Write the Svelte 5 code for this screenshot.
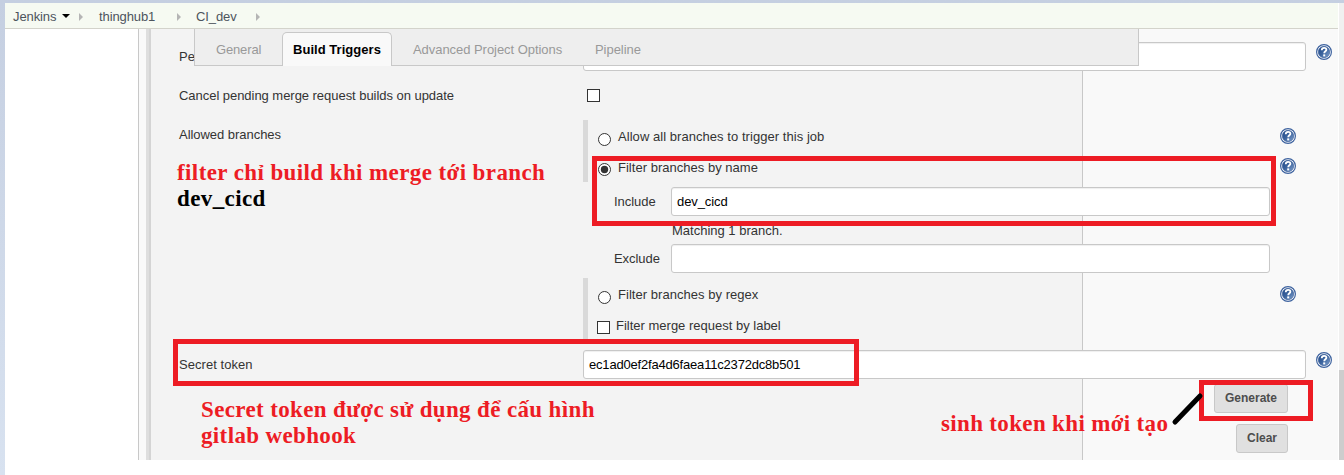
<script>
  const crumbs = ['thinghub1', 'CI_dev'];
  const tabs = ['General', 'Build Triggers', 'Advanced Project Options', 'Pipeline'];
  const active = 'Build Triggers';
</script>

{#snippet help()}
  <svg class="help" width="16" height="16" viewBox="0 0 16 16">
    <defs>
      <linearGradient id="ball" x1="0" y1="0" x2="1" y2="1">
        <stop offset="0" stop-color="#1d4686" />
        <stop offset=".5" stop-color="#3d659f" />
        <stop offset="1" stop-color="#86a6d2" />
      </linearGradient>
    </defs>
    <circle cx="8" cy="8" r="7.4" fill="#fff" stroke="#3e639f" stroke-width="1.2" />
    <circle cx="8" cy="8" r="5.7" fill="url(#ball)" stroke="#2f5695" stroke-width=".6" />
    <path d="M5.7 6.2C5.8 4.5 6.8 3.8 8.1 3.8C9.5 3.8 10.4 4.6 10.4 5.7C10.4 7.2 8.2 7.4 8.2 9.2" fill="none" stroke="#fff" stroke-width="1.8" />
    <rect x="7.2" y="10.4" width="2" height="2" fill="#fff" />
  </svg>
{/snippet}

{#snippet radio(on)}
  <svg class="radio" width="13" height="13" viewBox="0 0 13 13">
    <circle cx="6.5" cy="6.5" r="6" fill="#fff" stroke="#333" />
    {#if on}<circle cx="6.5" cy="6.5" r="3.7" fill="#333" />{/if}
  </svg>
{/snippet}

<div class="window">
  <nav class="crumbs">
    <span class="root">Jenkins</span>
    <svg class="down" width="8" height="4" viewBox="0 0 8 4"><path d="M0 0H8L4 4Z" fill="#000" /></svg>
    <svg class="sep" width="4" height="8" viewBox="0 0 4 8"><path d="M0 0L4 4L0 8Z" fill="#b5b5b5" /></svg>
    {#each crumbs as c, i}
      <span class="crumb c{i}">{c}</span>
      <svg class="sep" width="4" height="8" viewBox="0 0 4 8"><path d="M0 0L4 4L0 8Z" fill="#b5b5b5" /></svg>
    {/each}
  </nav>

  <div class="main">
    <aside></aside>
    <div class="gutter"></div>
    <div class="form">
      <div class="row first">
        <span class="label">Pe</span>
        <div class="input wide"></div>
        {@render help()}
      </div>
      <div class="row cancel">
        <span class="label">Cancel pending merge request builds on update</span>
        <span class="check"></span>
      </div>
      <div class="row">
        <span class="label allowed">Allowed branches</span>
        <div class="choices">
          <div class="group top">
            <div class="choice">{@render radio(false)}<span class="t1">Allow all branches to trigger this job</span>{@render help()}</div>
            <div class="choice">{@render radio(true)}<span class="t2">Filter branches by name</span>{@render help()}</div>
          </div>
          <div class="filter">
            <span>Include</span>
            <div class="input">dev_cicd</div>
          </div>
          <div class="match">Matching 1 branch.</div>
          <div class="filter exclude">
            <span>Exclude</span>
            <div class="input"></div>
          </div>
          <div class="group bottom">
            <div class="choice">{@render radio(false)}<span class="t3">Filter branches by regex</span>{@render help()}</div>
            <div class="choice bylabel"><span class="check"></span><span class="t4">Filter merge request by label</span></div>
          </div>
        </div>
      </div>
      <div class="row secret">
        <span class="label">Secret token</span>
        <div class="input wide">ec1ad0ef2fa4d6faea11c2372dc8b501</div>
        {@render help()}
      </div>
      <div class="buttons">
        <button class="generate">Generate</button>
        <button class="clear">Clear</button>
      </div>
    </div>
    <div class="scroll"><div class="thumb"></div></div>
  </div>

  <div class="tabs">
    {#each tabs as t, i}
      <span class="tab tab{i}" class:active={t === active}>{t}</span>
    {/each}
  </div>

  <div class="box box-filter"></div>
  <div class="box box-secret"></div>
  <div class="box box-generate"></div>
  <p class="note note-filter">filter chỉ build khi merge tới branch<br /><b>dev_cicd</b></p>
  <p class="note note-secret">Secret token được sử dụng để cấu hình<br />gitlab webhook</p>
  <p class="note note-generate">sinh token khi mới tạo</p>
  <svg class="stroke" width="34" height="36" viewBox="0 0 34 36"><path d="M5 32L30 6" stroke="#000" stroke-width="5" stroke-linecap="round" /></svg>
</div>

<style>
  :global(body) { margin: 0; background: #fff; }
  .window {
    position: relative; box-sizing: border-box; width: 1344px; height: 475px; overflow: hidden;
    padding: 3px 0 0 5px;
    background: linear-gradient(#fff, #fff) 5px 3px no-repeat, linear-gradient(#c5cfe1, #d8e2f0);
    font: 13px/15px "Liberation Sans", Arial, sans-serif; color: #333;
  }
  .crumbs {
    display: flex; align-items: center; box-sizing: border-box; width: 1333px; height: 26px;
    padding-left: 8px; background: #f6faf2; border-bottom: 1px solid #d3d3cb; color: #4d545d;
  }
  .crumbs span { margin-top: 2px; letter-spacing: -.1px; }
  .root { width: 44px; }
  .down { margin: 0 9px 0 5px; }
  .sep { margin-top: 2px; }
  .crumb { box-sizing: border-box; }
  .c0 { width: 78px; margin-left: 16px; }
  .c1 { width: 60px; margin-left: 15px; }
  .main { display: flex; height: 431px; }
  aside { width: 133px; border-right: 1px solid #c8c8c8; }
  .gutter { width: 7px; background: #f9f9f9; border-right: 3px solid #dedede; }
  .form {
    box-sizing: border-box; width: 1189px; padding: 13px 0 0 28px; border-left: 2px solid #d4d4d4;
    background: linear-gradient(90deg, #f3f3f3 931px, #c8c8c8 931px, #c8c8c8 932px, #f9f9f9 932px);
  }
  .row { display: flex; align-items: flex-start; white-space: nowrap; }
  .label { flex: none; width: 404px; letter-spacing: -.04px; }
  .input {
    box-sizing: border-box; width: 599px; height: 29px; padding: 6px 5px; background: #fff;
    border: 1px solid #c8c8c8; border-radius: 3px; box-shadow: inset 0 1px 1px #0001; color: #000;
    letter-spacing: -.1px;
  }
  .input.wide { width: 723px; letter-spacing: -.19px; }
  .help { flex: none; display: block; }
  .first .label { padding-top: 7px; }
  .first .help, .secret .help { margin: 2px 0 0 10px; }
  .cancel { height: 49px; }
  .cancel .label { padding-top: 17px; }
  .check { box-sizing: border-box; flex: none; width: 13px; height: 13px; background: #fff; border: 1px solid #333; }
  .cancel .check { margin: 18px 0 0 4px; }
  .allowed { padding-top: 7px; }
  .group { box-sizing: border-box; width: 713px; border-left: 5px solid #d9d9d9; }
  .top { height: 62px; padding-top: 8px; }
  .choice { display: flex; align-items: flex-start; height: 30px; padding-left: 10px; }
  .radio { display: block; margin: 5px 7px 0 0; }
  .choice .help { margin-left: auto; }
  .choice .t1 { margin-top: 1px; letter-spacing: .05px; }
  .choice .t2 { margin-top: 2px; letter-spacing: .02px; }
  .choice .t3 { margin-top: 1px; letter-spacing: .04px; }
  .filter { display: flex; padding: 5px 0 0 31px; }
  .filter span { width: 57px; padding-top: 7px; letter-spacing: -.05px; }
  .match { height: 23px; padding: 7px 0 0 89px; box-sizing: border-box; }
  .bottom { height: 61px; margin-top: 5px; padding-top: 8px; }
  .bylabel { padding-left: 9px; }
  .bylabel .check { margin: 5px 6px 0 0; }
  .bylabel .t4 { margin-top: 2px; }
  .secret { padding-top: 11px; }
  .secret .label { padding-top: 7px; letter-spacing: .05px; }
  .buttons { display: flex; flex-direction: column; align-items: flex-end; gap: 11px; width: 1109px; padding-top: 5px; }
  button {
    height: 29px; padding: 0 0 2px; background: #e0e0e0; border: 1px solid #c8c8c8; border-radius: 3px;
    font: bold 12px "Liberation Sans", Arial, sans-serif; color: #4d4d4d;
  }
  .generate { width: 74px; }
  .clear { width: 52px; }
  .scroll { width: 5px; height: 90px; margin: -26px 0 0 1px; padding-top: 367px; background: #f0f0f0; }
  .thumb { height: 90px; background: #cdcdcd; }
  .tabs {
    position: absolute; left: 194px; top: 29px; box-sizing: border-box; width: 945px; height: 37px;
    display: flex; padding-left: 21px; background: #eee; border: solid #c8c8c8; border-width: 0 1px 1px; color: #999;
  }
  .tab { box-sizing: border-box; flex: none; height: 34px; margin-top: 3px; padding-top: 10px; white-space: nowrap; letter-spacing: -.05px; }
  .tab0 { width: 66px; letter-spacing: -.15px; }
  .tab1 { width: 110px; padding: 9px 0 0 10px; background: #f9f9f9; border: 1px solid #c8c8c8; border-bottom: 0; border-radius: 5px 5px 0 0; color: #000; font-weight: bold; letter-spacing: .04px; }
  .tab2 { width: 203px; padding-left: 21px; }
  .box { position: absolute; box-sizing: border-box; border: 5px solid #ed1c24; }
  .box-filter { left: 592px; top: 156px; width: 684px; height: 70px; }
  .box-secret { left: 173px; top: 339px; width: 686px; height: 47px; }
  .box-generate { left: 1199px; top: 380px; width: 114px; height: 41px; }
  .note { position: absolute; margin: 0; font: bold 23px/26px "Liberation Serif", "Times New Roman", serif; letter-spacing: .4px; color: #ed1c24; white-space: nowrap; }
  .note b { color: #000; }
  .note-filter { left: 177px; top: 160px; }
  .note-secret { left: 201px; top: 397px; letter-spacing: .36px; }
  .note-generate { left: 941px; top: 411px; letter-spacing: .34px; }
  .stroke { position: absolute; left: 1170px; top: 390px; }
</style>
